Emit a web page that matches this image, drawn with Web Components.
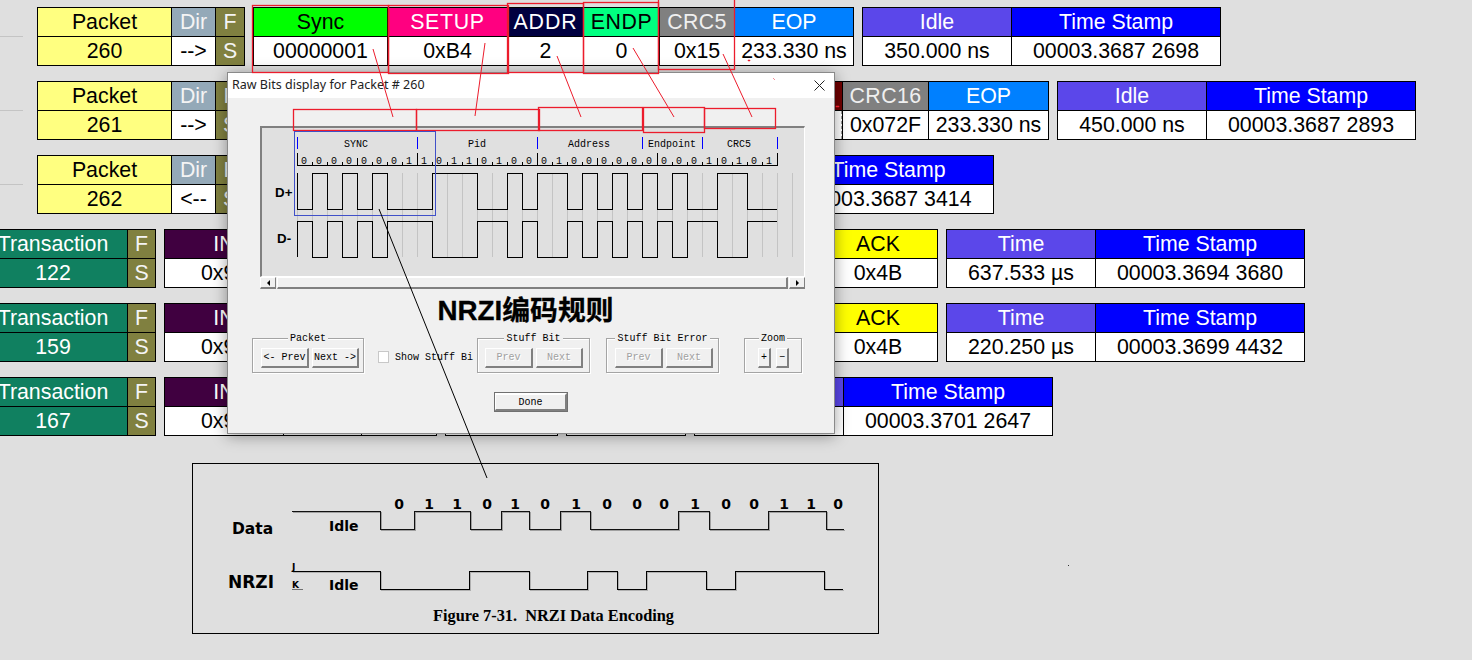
<!DOCTYPE html>
<html>
<head>
<meta charset="utf-8">
<title>Raw Bits</title>
<style>
  html, body { margin: 0; height: 660px; overflow: hidden; }
  body {
    position: relative;
    padding-top: 7px;
    box-sizing: border-box;
    background: #dfdfdf;
    font-family: "Liberation Sans", Arial, sans-serif;
    font-size: 21.33px;
  }
  .bits { display: flex; flex-direction: column; gap: 15px; }
</style>
</head>
<body>
  <div class="bits">
    <usb-row tick>
      <usb-group>
        <usb-field w="133" tone="packet" label="Packet" value="260"></usb-field>
        <usb-field w="43" tone="dir" label="Dir" value="--&gt;"></usb-field>
        <usb-field w="28" tone="flag" label="F" value="S"></usb-field>
      </usb-group>
      <usb-group>
        <usb-field w="133" tone="sync" label="Sync" value="00000001"></usb-field>
        <usb-field w="119" tone="setup" label="SETUP" value="0xB4"></usb-field>
        <usb-field w="75" tone="addr" label="ADDR" value="2"></usb-field>
        <usb-field w="75" tone="endp" label="ENDP" value="0"></usb-field>
        <usb-field w="74" tone="crc" label="CRC5" value="0x15"></usb-field>
        <usb-field w="118" tone="eop" label="EOP" value="233.330 ns"></usb-field>
      </usb-group>
      <usb-group>
        <usb-field w="148" tone="idle" label="Idle" value="350.000 ns"></usb-field>
        <usb-field w="208" tone="stamp" label="Time Stamp" value="00003.3687 2698"></usb-field>
      </usb-group>
    </usb-row>

    <usb-row tick>
      <usb-group>
        <usb-field w="133" tone="packet" label="Packet" value="261"></usb-field>
        <usb-field w="43" tone="dir" label="Dir" value="--&gt;"></usb-field>
        <usb-field w="28" tone="flag" label="F" value="S"></usb-field>
      </usb-group>
      <usb-group>
        <usb-field w="133" tone="sync"></usb-field>
        <usb-field w="119" tone="setup"></usb-field>
        <usb-field w="334" tone="data"></usb-field>
        <usb-field w="85" tone="crc" label="CRC16" value="0x072F"></usb-field>
        <usb-field w="119" tone="eop" label="EOP" value="233.330 ns"></usb-field>
      </usb-group>
      <usb-group>
        <usb-field w="148" tone="idle" label="Idle" value="450.000 ns"></usb-field>
        <usb-field w="208" tone="stamp" label="Time Stamp" value="00003.3687 2893"></usb-field>
      </usb-group>
    </usb-row>

    <usb-row tick>
      <usb-group>
        <usb-field w="133" tone="packet" label="Packet" value="262"></usb-field>
        <usb-field w="43" tone="dir" label="Dir" value="&lt;--"></usb-field>
        <usb-field w="28" tone="flag" label="F" value="S"></usb-field>
      </usb-group>
      <usb-group>
        <usb-field w="529" tone="idle"></usb-field>
        <usb-field w="209" tone="stamp" label="Time Stamp" value="00003.3687 3414"></usb-field>
      </usb-group>
    </usb-row>

    <usb-row indent="-22">
      <usb-group>
        <usb-field w="148" tone="trans" label="Transaction" value="122"></usb-field>
        <usb-field w="27" tone="flag" label="F" value="S"></usb-field>
      </usb-group>
      <usb-group>
        <usb-field w="118" tone="in" label="IN" value="0x96"></usb-field>
        <usb-field w="77" tone="addr"></usb-field>
        <usb-field w="74" tone="endp"></usb-field>
      </usb-group>
      <usb-group><usb-field w="363" tone="data"></usb-field></usb-group>
      <usb-group><usb-field w="118" tone="ack" label="ACK" value="0x4B"></usb-field></usb-group>
      <usb-group>
        <usb-field w="148" tone="idle" label="Time" value="637.533 µs"></usb-field>
        <usb-field w="208" tone="stamp" label="Time Stamp" value="00003.3694 3680"></usb-field>
      </usb-group>
    </usb-row>

    <usb-row indent="-22">
      <usb-group>
        <usb-field w="148" tone="trans" label="Transaction" value="159"></usb-field>
        <usb-field w="27" tone="flag" label="F" value="S"></usb-field>
      </usb-group>
      <usb-group>
        <usb-field w="118" tone="in" label="IN" value="0x96"></usb-field>
        <usb-field w="77" tone="addr"></usb-field>
        <usb-field w="74" tone="endp"></usb-field>
      </usb-group>
      <usb-group><usb-field w="363" tone="data"></usb-field></usb-group>
      <usb-group><usb-field w="118" tone="ack" label="ACK" value="0x4B"></usb-field></usb-group>
      <usb-group>
        <usb-field w="148" tone="idle" label="Time" value="220.250 µs"></usb-field>
        <usb-field w="208" tone="stamp" label="Time Stamp" value="00003.3699 4432"></usb-field>
      </usb-group>
    </usb-row>

    <usb-row indent="-22">
      <usb-group>
        <usb-field w="148" tone="trans" label="Transaction" value="167"></usb-field>
        <usb-field w="27" tone="flag" label="F" value="S"></usb-field>
      </usb-group>
      <usb-group>
        <usb-field w="118" tone="in" label="IN" value="0x96"></usb-field>
        <usb-field w="77" tone="addr"></usb-field>
        <usb-field w="74" tone="endp"></usb-field>
      </usb-group>
      <usb-group><usb-field w="111" tone="data"></usb-field></usb-group>
      <usb-group><usb-field w="118" tone="ack"></usb-field></usb-group>
      <usb-group>
        <usb-field w="148" tone="idle"></usb-field>
        <usb-field w="208" tone="stamp" label="Time Stamp" value="00003.3701 2647"></usb-field>
      </usb-group>
    </usb-row>
  </div>

  <nrzi-figure></nrzi-figure>

  <raw-bits-dialog heading="Raw Bits display for Packet # 260">
    <bit-wave></bit-wave>
    <span slot="note">NRZI编码规则</span>
    <dlg-group slot="controls" label="Packet" style="margin-left:24px;width:112px;--inset:8px">
      <dlg-button w="48">&lt;- Prev</dlg-button>
      <dlg-button w="47">Next -&gt;</dlg-button>
    </dlg-group>
    <dlg-check slot="controls" style="margin-left:14px;width:99px">Show Stuff Bi</dlg-check>
    <dlg-group slot="controls" label="Stuff Bit" style="width:113px;--inset:7px">
      <dlg-button w="48" disabled>Prev</dlg-button>
      <dlg-button w="47" disabled>Next</dlg-button>
    </dlg-group>
    <dlg-group slot="controls" label="Stuff Bit Error" style="margin-left:16px;width:113px;--inset:8px">
      <dlg-button w="48" disabled>Prev</dlg-button>
      <dlg-button w="47" disabled>Next</dlg-button>
    </dlg-group>
    <dlg-group slot="controls" label="Zoom" style="margin-left:25px;width:58px;--inset:13px;--gap:5px">
      <dlg-button w="13">+</dlg-button>
      <dlg-button w="13">−</dlg-button>
    </dlg-group>
    <dlg-button slot="done" w="74" strong>Done</dlg-button>
  </raw-bits-dialog>

  <usb-annotations></usb-annotations>

<script>
const TONES = {
  packet: { head: "#ffff80", ink: "#000", val: "#ffff80", valInk: "#000" },
  dir: { head: "#94a9b8", ink: "#f4f4f4" },
  flag: { head: "#808040", ink: "#f4f4f4", val: "#808040", valInk: "#f4f4f4" },
  sync: { head: "#00ff00", ink: "#000" },
  setup: { head: "#ff0080", ink: "#fff", track: 0.7 },
  addr: { head: "#000040", ink: "#fff", track: 0.9 },
  endp: { head: "#00ff80", ink: "#000", track: 0.5 },
  crc: { head: "#808080", ink: "#efefef", track: 0.4 },
  eop: { head: "#0080ff", ink: "#fff" },
  idle: { head: "#5b47ea", ink: "#fff" },
  stamp: { head: "#0000ff", ink: "#fff" },
  data: { head: "#700000", ink: "#fff" },
  trans: { head: "#108060", ink: "#fff", val: "#108060", valInk: "#fff" },
  in: { head: "#400040", ink: "#fff" },
  ack: { head: "#ffff00", ink: "#000" },
};

class UsbRow extends HTMLElement {
  constructor() {
    super();
    this.attachShadow({ mode: "open" });
    this.shadowRoot.innerHTML = `
      <style>
        :host { display: flex; gap: 8px; height: 59px; margin-left: var(--indent, 0); }
        .tick { width: 23px; height: 1px; margin: 29px 6px 0 0; background: #c4c4c4; flex: none; }
      </style>
      ${this.hasAttribute("tick") ? '<span class="tick"></span>' : ""}
      <slot></slot>
    `;
    if (this.hasAttribute("indent")) this.style.setProperty("--indent", this.getAttribute("indent") + "px");
  }
}
customElements.define("usb-row", UsbRow);

class UsbGroup extends HTMLElement {
  constructor() {
    super();
    this.attachShadow({ mode: "open" });
    this.shadowRoot.innerHTML = `
      <style>
        :host { display: flex; flex: none; gap: 1px; padding: 1px; background: #000; }
      </style>
      <slot></slot>
    `;
  }
}
customElements.define("usb-group", UsbGroup);

class UsbField extends HTMLElement {
  constructor() {
    super();
    this.attachShadow({ mode: "open" });
    const tone = TONES[this.getAttribute("tone")];
    const dashed = this.getAttribute("tone") === "data" && !this.closest("usb-row[indent]");
    this.shadowRoot.innerHTML = `
      <style>
        :host { display: flex; flex-direction: column; flex: none; gap: 1px; width: ${this.getAttribute("w")}px; }
        .cell {
          height: 28px;
          display: flex;
          align-items: center;
          justify-content: center;
          white-space: nowrap;
          box-sizing: border-box;
        }
        .head { background: ${tone.head}; color: ${tone.ink}; letter-spacing: ${tone.track || 0}px; }
        .val { background: ${tone.val || "#fff"}; color: ${tone.valInk || "#000"}; ${dashed ? "border-right: 1px dashed #999;" : ""} }
      </style>
      <div class="cell head"></div>
      <div class="cell val"></div>
    `;
    this.shadowRoot.querySelector(".head").textContent = this.getAttribute("label") || "";
    this.shadowRoot.querySelector(".val").textContent = this.getAttribute("value") || "";
  }
}
customElements.define("usb-field", UsbField);

class RawBitsDialog extends HTMLElement {
  constructor() {
    super();
    this.attachShadow({ mode: "open" });
    this.shadowRoot.innerHTML = `
      <style>
        :host {
          position: absolute;
          left: 227px;
          top: 72px;
          width: 608px;
          height: 362px;
          box-sizing: border-box;
          border: 1px solid #8a8a8a;
          background: #f0f0f0;
          box-shadow: 0 2px 14px rgba(0, 0, 0, 0.38);
          font-family: "Liberation Mono", monospace;
          font-size: 10px;
          color: #000;
        }
        .title {
          height: 25px;
          display: flex;
          align-items: center;
          justify-content: space-between;
          padding: 0 9px 0 4px;
          background: #fff;
          font: 12.5px "Noto Sans", "Open Sans", sans-serif;
          color: #222;
        }
        .title span { margin-top: -2px; }
        .title svg { display: block; }
        .panel {
          width: 545px;
          height: 151px;
          margin: 28px 0 0 32px;
          box-sizing: border-box;
          border-style: solid;
          border-width: 2px 1px 1px 2px;
          border-color: #808080 #fff #fff #808080;
          background: #e0e0e0;
        }
        .scroll {
          display: flex;
          gap: 1px;
          width: 545px;
          height: 12px;
          margin-left: 32px;
        }
        .scroll div {
          box-sizing: border-box;
          border-style: solid;
          border-width: 1px 1px 2px 1px;
          border-color: #fff #808080 #808080 #fff;
          display: flex;
          align-items: center;
          justify-content: center;
        }
        .scroll .btn { width: 16px; flex: none; }
        .scroll .track { flex: 1; border-right-width: 2px; }
        .arrow { width: 0; height: 0; border: 3px solid transparent; }
        .arrow.l { border-right-color: #000; border-left-width: 0; }
        .arrow.r { border-left-color: #000; border-right-width: 0; }
        .note {
          height: 38px;
          padding: 0 11px 4px 0;
          box-sizing: content-box;
          margin-bottom: -2px;
          display: flex;
          align-items: center;
          justify-content: center;
          font: 700 27.8px "Liberation Sans", "Noto Sans CJK SC", sans-serif;
          -webkit-text-stroke: 0.3px #000;
          color: #000;
        }
        .controls { display: flex; height: 36px; margin-top: 9px; }
        .done { display: flex; justify-content: center; margin-top: 18px; }
      </style>
      <div class="title">
        <span></span>
        <svg width="11" height="11" viewBox="0 0 11 11"><path d="M.5.5l10 10M10.500.5l-10 10" stroke="#222" stroke-width="1" fill="none"/></svg>
      </div>
      <div class="panel"><slot></slot></div>
      <div class="scroll">
        <div class="btn"><span class="arrow l"></span></div>
        <div class="track"></div>
        <div class="btn"><span class="arrow r"></span></div>
      </div>
      <div class="note"><slot name="note"></slot></div>
      <div class="controls"><slot name="controls"></slot></div>
      <div class="done"><slot name="done"></slot></div>
    `;
    this.shadowRoot.querySelector(".title span").textContent = this.getAttribute("heading");
  }
}
customElements.define("raw-bits-dialog", RawBitsDialog);

class DlgGroup extends HTMLElement {
  constructor() {
    super();
    this.attachShadow({ mode: "open" });
    this.shadowRoot.innerHTML = `
      <style>
        :host { display: block; flex: none; box-sizing: border-box; }
        .box {
          height: 35px;
          box-sizing: border-box;
          border: 1px solid #a4a4a4;
          box-shadow: 1px 1px 0 #fff, inset 1px 1px 0 #fff;
        }
        .legend {
          display: table;
          height: 12px;
          line-height: 12px;
          margin: -6px auto 0;
          padding: 0 2px;
          background: #f0f0f0;
        }
        .row {
          display: flex;
          gap: var(--gap, 3px);
          margin-top: 3px;
          padding-left: var(--inset, 8px);
        }
      </style>
      <div class="box">
        <div class="legend"></div>
        <div class="row"><slot></slot></div>
      </div>
    `;
    this.shadowRoot.querySelector(".legend").textContent = this.getAttribute("label");
  }
}
customElements.define("dlg-group", DlgGroup);

class DlgButton extends HTMLElement {
  constructor() {
    super();
    this.attachShadow({ mode: "open" });
    const strong = this.hasAttribute("strong");
    this.shadowRoot.innerHTML = `
      <style>
        :host {
          display: flex;
          flex: none;
          align-items: center;
          justify-content: center;
          width: ${this.getAttribute("w")}px;
          height: 20px;
          box-sizing: border-box;
          border-style: solid;
          border-width: 1px 2px 2px 1px;
          border-color: #fff #808080 #808080 #fff;
          background: #f0f0f0;
          white-space: nowrap;
          ${strong ? "outline: 1px solid #707070; outline-offset: -1px; border-width: 3px 3px 3px 2px;" : ""}
          ${this.hasAttribute("disabled") ? "color: #a0a0a0; text-shadow: 1px 1px 0 #fff;" : ""}
        }
      </style>
      <slot></slot>
    `;
  }
}
customElements.define("dlg-button", DlgButton);

class DlgCheck extends HTMLElement {
  constructor() {
    super();
    this.attachShadow({ mode: "open" });
    this.shadowRoot.innerHTML = `
      <style>
        :host { display: flex; flex: none; align-items: center; gap: 6px; height: 12px; margin-top: 13px; white-space: nowrap; }
        .box { width: 11px; height: 12px; box-sizing: border-box; background: #fff; border: 1px solid #c8c8c8; flex: none; }
      </style>
      <span class="box"></span><slot></slot>
    `;
  }
}
customElements.define("dlg-check", DlgCheck);

function stepPath(startX, endX, hi, lo, startHigh, edges) {
  let level = startHigh;
  let d = `M${startX} ${level ? hi : lo}`;
  edges.forEach(x => {
    d += `H${x}`;
    level = !level;
    d += `V${level ? hi : lo}`;
  });
  return d + `H${endX}`;
}

class BitWave extends HTMLElement {
  constructor() {
    super();
    this.attachShadow({ mode: "open" });
    const x0 = 297, step = 15;
    const bits = "00000001" + "10110100" + "01000000" + "00010101";
    let grid = "", ruler = "", digits = "";
    for (let n = 0; n <= 33; n++) {
      const x = x0 + n * step + 0.5;
      grid += `M${x} 173V257`;
    }
    for (let n = 0; n <= 32; n++) {
      const x = x0 + n * step + 0.5;
      const top = n % 8 === 0 ? 153 : n % 4 === 0 ? 158 : 162;
      ruler += `M${x} ${top}V165`;
    }
    [...bits].forEach((b, n) => {
      digits += `<text x="${x0 + n * step + 7}" y="164" text-anchor="middle">${b}</text>`;
    });
    const slots = [1, 2, 3, 4, 5, 6, 9, 12, 14, 15, 16, 18, 19, 20, 21, 22, 23, 24, 25, 26, 28, 30];
    const edges = slots.map(n => x0 + n * step + 0.5);
    const plus = "M297.5 173V209.5" + stepPath(297.5, 777, 173.5, 209.5, false, edges).replace(/^M[\d.]+ [\d.]+/, "");
    const minus = "M297.5 257V221.5" + stepPath(297.5, 777, 221.5, 257.5, true, edges).replace(/^M[\d.]+ [\d.]+/, "");
    const blue = [297, 417, 537, 642, 702, 777].map(x => `M${x + 0.5} 137V149`).join("");
    const labels = [["SYNC", 356], ["Pid", 477], ["Address", 589], ["Endpoint", 672], ["CRC5", 739]];
    this.shadowRoot.innerHTML = `
      <style>
        :host { display: block; width: 542px; height: 148px; }
        svg { display: block; }
        text { font: 10px "Liberation Mono", monospace; fill: #000; }
        .sig { font: 700 13.33px "Liberation Sans", sans-serif; }
      </style>
      <svg width="542" height="148" viewBox="262 128 542 148" shape-rendering="crispEdges">
        <path d="${grid}" stroke="#c4c4c4" fill="none"/>
        <path d="${blue}" stroke="#0000ff" fill="none"/>
        <path d="M297 165.5H778${ruler}" stroke="#000" fill="none"/>
        ${labels.map(l => `<text x="${l[1]}" y="147" text-anchor="middle">${l[0]}</text>`).join("")}
        ${digits}
        <text class="sig" x="275" y="197">D+</text>
        <text class="sig" x="277" y="243">D-</text>
        <path d="${plus}" stroke="#000" fill="none"/>
        <path d="${minus}" stroke="#000" fill="none"/>
      </svg>
    `;
  }
}
customElements.define("bit-wave", BitWave);

class NrziFigure extends HTMLElement {
  constructor() {
    super();
    this.attachShadow({ mode: "open" });
    const data = stepPath(292, 844, 511.5, 529.5, true, [380.5, 414.5, 470.5, 501.5, 529.5, 560.5, 590.5, 678.5, 709.5, 768.5, 826.5]);
    const nrzi = stepPath(292, 843, 571.5, 589.5, true, [380.5, 469.5, 529.5, 587.5, 617.5, 646.5, 706.5, 735.5, 824.5]);
    const marks = [[399, 0], [429, 1], [457, 1], [487, 0], [515, 1], [545, 0], [576, 1], [607, 0], [637, 0], [664, 0], [695, 1], [726, 0], [754, 0], [784, 1], [811, 1], [838, 0]];
    this.shadowRoot.innerHTML = `
      <style>
        :host {
          display: block;
          width: 687px;
          height: 171px;
          margin: 27px 0 0 192px;
          box-sizing: border-box;
          border: 1px solid #000;
        }
        svg { display: block; }
        text { font-family: "DejaVu Sans", Verdana, sans-serif; font-weight: 700; fill: #000; }
        .cap { font: 700 16.33px "Liberation Serif", "Times New Roman", serif; white-space: pre; }
      </style>
      <svg width="685" height="169" viewBox="193 464 685 169">
        <g shape-rendering="crispEdges" fill="none">
          <path d="${data}" stroke="#a0a0a0" transform="translate(1 1)"/>
          <path d="${nrzi}" stroke="#b0b0b0" transform="translate(1 1)"/>
          <path d="${data}" stroke="#111"/>
          <path d="${nrzi}" stroke="#000"/>
          <path d="M292 589.5H303" stroke="#707070"/>
        </g>
        ${marks.map(m => `<text x="${m[0]}" y="509" text-anchor="middle" font-size="14">${m[1]}</text>`).join("")}
        <text x="232" y="534" font-size="15.5">Data</text>
        <text x="228" y="588" font-size="17">NRZI</text>
        <text x="329" y="531" font-size="14">Idle</text>
        <text x="329" y="590" font-size="14">Idle</text>
        <text x="292" y="570" font-size="9">J</text>
        <text x="292" y="588" font-size="9">K</text>
        <text class="cap" x="433" y="621">Figure 7-31.  NRZI Data Encoding</text>
      </svg>
    `;
  }
}
customElements.define("nrzi-figure", NrziFigure);

// hand drawn marks that sit on top of the whole screenshot
class UsbAnnotations extends HTMLElement {
  constructor() {
    super();
    this.attachShadow({ mode: "open" });
    const boxes = [
      [252, 5, 388, 72], [388, 5, 508, 73], [507, 3, 583, 72], [583, 2, 658, 73], [658, -2, 734, 69],
      [293, 109, 416, 130], [416, 109, 539, 130], [538, 107, 642, 130], [643, 107, 704, 132], [704, 108, 775, 128],
    ];
    const lines = [
      [373, 49, 393, 117], [485, 43, 475, 116], [557, 56, 581, 117], [633, 48, 674, 117], [723, 54, 752, 117],
    ];
    this.shadowRoot.innerHTML = `
      <style>
        :host { position: absolute; left: 0; top: 0; width: 1472px; height: 660px; pointer-events: none; }
        svg { display: block; }
      </style>
      <svg width="1472" height="660" viewBox="0 0 1472 660" fill="none">
        ${boxes.map(b => `<rect x="${b[0] + 0.5}" y="${b[1] + 0.5}" width="${b[2] - b[0]}" height="${b[3] - b[1]}" stroke="#ec1c2c" stroke-width="1.3"/>`).join("")}
        ${lines.map(l => `<line x1="${l[0]}" y1="${l[1]}" x2="${l[2]}" y2="${l[3]}" stroke="#ec1c2c"/>`).join("")}
        <path d="M748 60h2v1h-2zM773 78l2 2M836 106h3v1h-3z" fill="#ec1c2c" stroke="#ec1c2c" stroke-width=".5"/>
        <rect x="294.5" y="131.5" width="141" height="84" stroke="#4050c8"/>
        <line x1="379" y1="209" x2="487" y2="478" stroke="#000"/>
        <rect x="1068" y="565" width="1" height="1" fill="#333"/>
      </svg>
    `;
  }
}
customElements.define("usb-annotations", UsbAnnotations);
</script>
</body>
</html>
